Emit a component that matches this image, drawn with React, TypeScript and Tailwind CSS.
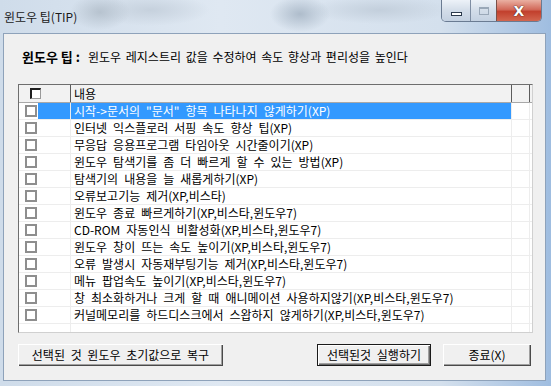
import React from 'react';

const items = [
  '시작->문서의 "문서" 항목 나타나지 않게하기(XP)',
  '인터넷 익스플로러 서핑 속도 향상 팁(XP)',
  '무응답 응용프로그램 타임아웃 시간줄이기(XP)',
  '윈도우 탐색기를 좀 더 빠르게 할 수 있는 방법(XP)',
  '탐색기의 내용을 늘 새롭게하기(XP)',
  '오류보고기능 제거(XP,비스타)',
  '윈도우 종료 빠르게하기(XP,비스타,윈도우7)',
  'CD-ROM 자동인식 비활성화(XP,비스타,윈도우7)',
  '윈도우 창이 뜨는 속도 높이기(XP,비스타,윈도우7)',
  '오류 발생시 자동재부팅기능 제거(XP,비스타,윈도우7)',
  '메뉴 팝업속도 높이기(XP,비스타,윈도우7)',
  '창 최소화하거나 크게 할 때 애니메이션 사용하지않기(XP,비스타,윈도우7)',
  '커널메모리를 하드디스크에서 스왑하지 않게하기(XP,비스타,윈도우7)',
];

const font = { fontFamily: '"Noto Sans CJK KR", "Noto Sans", sans-serif' };

function CheckBox() {
  return <span className="block w-[12px] h-[12px] shrink-0 bg-white border-2 border-[#8e8e8e]" />;
}

function Button({ children, w, isDefault }: { children: React.ReactNode; w: string; isDefault?: boolean }) {
  return (
    <button
      className={`${w} h-[22px] bg-[#f0f0f0] text-[12px] leading-[20px] text-black flex items-center justify-center [word-spacing:3px] ${
        isDefault
          ? 'border border-[#1a1a1a] shadow-[inset_1px_1px_0_#ffffff,inset_-1px_-1px_0_#696969,inset_-2px_-2px_0_#a0a0a0]'
          : 'shadow-[inset_1px_1px_0_#ffffff,inset_-1px_-1px_0_#4a4a4a,inset_-2px_-2px_0_#a0a0a0]'
      }`}
    >
      {children}
    </button>
  );
}

export default function App() {
  return (
    <div
      className="w-[551px] h-[386px] overflow-hidden bg-[radial-gradient(ellipse_30px_18px_at_100px_12px,#b7c3cf,transparent),radial-gradient(ellipse_60px_16px_at_150px_10px,#c6d1dd,transparent),radial-gradient(ellipse_30px_18px_at_300px_14px,#aebccb,transparent),radial-gradient(ellipse_70px_14px_at_380px_10px,#c3cfdc,transparent),linear-gradient(90deg,#cfdcea,#dfe8f2_40%,#d4e0ed_80%,#9fbde0)]"
      style={font}
    >
      {/* title bar */}
      <div className="h-[33px] flex items-start justify-between">
        <div className="pl-[4px] pt-[9px] text-[12px] leading-[16px] text-[#1a1a1a]">윈도우 팁(TIP)</div>
        <div className="mr-[9px] flex h-[22px] rounded-b-[5px] border border-t-0 border-[#6a7b92] overflow-hidden">
          <div className="w-[29px] flex items-center justify-center border-r border-[#7f8ea3] bg-[linear-gradient(#edf2f8,#d3dde9_50%,#c4d1e1)]">
            <span className="block w-[11px] h-[4px] mt-[6px] border border-[#2c3a4c] bg-white" />
          </div>
          <div className="w-[26px] flex items-center justify-center border-r border-[#7a5048] bg-[linear-gradient(#edf2f8,#d3dde9_50%,#c4d1e1)]">
            <span className="block w-[10px] h-[8px] border border-[#9aa8b8] border-t-2" />
          </div>
          <div className="w-[44px] flex items-center justify-center bg-[linear-gradient(#eab0a2,#d26a5a_45%,#c2402d_55%,#d2664f)]">
            <span className="text-white font-bold text-[14px] leading-none [text-shadow:0_0_1px_#3a1a14,0_0_1px_#3a1a14]" style={{ fontFamily: '"DejaVu Sans", sans-serif' }}>
              X
            </span>
          </div>
        </div>
      </div>

      {/* client area */}
      <div className="ml-[3px] w-[543px] h-[348px] bg-[#f0f0f0] border border-[#8ea2ba] pl-[14px] pr-[14px] flex flex-col">
        <div className="mt-[15px] pl-[4px] text-[12px] leading-[16px] text-black whitespace-nowrap">
          <span className="font-bold text-[13px]">윈도우 팁 :</span>
          <span className="ml-[8px] [word-spacing:2px]">윈도우 레지스트리 값을 수정하여 속도 향상과 편리성을 높인다</span>
        </div>

        <div className="mt-[19px] w-[515px] h-[249px] bg-white border border-[#6e6e6e] border-r-[#d0d0d0] border-b-[#d0d0d0] flex flex-col overflow-hidden">
          {/* header */}
          <div className="h-[18px] shrink-0 flex bg-[#f2f2f2] border-b border-[#a8a8a8] text-[12px] leading-[17px]">
            <div className="w-[52px] flex items-center pl-[11px] border-r border-[#5c5c5c]">
              <span className="block w-[11px] h-[11px] bg-white border-l-2 border-t-2 border-r border-b border-[#1e1e1e] border-r-[#9a9a9a] border-b-[#9a9a9a]" />
            </div>
            <div className="w-[441px] pl-[3px] border-r border-[#5c5c5c]">내용</div>
            <div className="w-[18px] border-r border-[#5c5c5c]" />
          </div>

          {items.map((t, i) => {
            const sel = i === 0;
            return (
              <div key={t} className="h-[17px] shrink-0 flex border-b border-[#ededed] text-[12px] leading-[16px] whitespace-nowrap [word-spacing:3.3px]">
                <div className="w-[52px] flex items-center pl-[6px] border-r border-[#ededed]">
                  <CheckBox />
                  {sel && <span className="ml-[1px] self-stretch flex-1 bg-[#3399ff]" />}
                </div>
                <div className={`w-[441px] pl-[3px] border-r border-[#ededed] ${sel ? 'bg-[#3399ff] text-white' : 'text-black'}`}>{t}</div>
                <div className="w-[18px] border-r border-[#ededed]" />
              </div>
            );
          })}
          <div className="flex-1 flex">
            <div className="w-[52px] border-r border-[#ededed]" />
            <div className="w-[441px] border-r border-[#ededed]" />
            <div className="w-[18px] border-r border-[#ededed]" />
          </div>
        </div>

        <div className="mt-[11px] flex">
          <Button w="w-[205px]">선택된 것 윈도우 초기값으로 복구</Button>
          <div className="ml-auto flex gap-[12px]">
            <Button w="w-[114px]" isDefault>
              선택된것 실행하기
            </Button>
            <Button w="w-[88px]">종료(X)</Button>
          </div>
        </div>
      </div>
    </div>
  );
}
